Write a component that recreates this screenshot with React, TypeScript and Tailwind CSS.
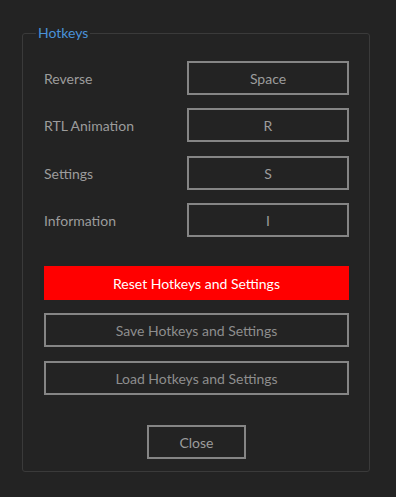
import React from 'react';

const hotkeys = [
  { label: 'Reverse', key: 'Space' },
  { label: 'RTL Animation', key: 'R' },
  { label: 'Settings', key: 'S' },
  { label: 'Information', key: 'I' },
];

const App: React.FC = () => {
  return (
    <div
      className="min-h-[497px] w-[396px] bg-[#232323] pt-[23px] pl-[22px]"
      style={{ fontFamily: 'Lato, "Open Sans", sans-serif' }}
    >
      <fieldset className="w-[348px] rounded-[3px] border border-[#3a3a3a] pt-[18px] pr-[20px] pb-[12px] pl-[21px]">
        <legend className="-ml-[8px] px-[2px] text-[14px] leading-[20px] text-[#4a92d8]">Hotkeys</legend>

        {/* Hotkey rows */}
        <div className="flex flex-col gap-[13px]">
          {hotkeys.map((h, i) => (
            <div key={h.label} className={`flex h-[34px] items-center justify-between ${i === 2 ? 'mt-[1px]' : ''}`}>
              <span className="text-[14px] text-[#9c9c9c]">{h.label}</span>
              <div className="flex h-[34px] w-[162px] items-center justify-center border-2 border-[#858585] text-[14px] text-[#9c9c9c]">
                {h.key}
              </div>
            </div>
          ))}
        </div>

        {/* Actions */}
        <div className="mt-[29px] flex flex-col">
          <button className="flex h-[34px] w-full items-center justify-center bg-[#ff0000] text-[14px] text-white">
            Reset Hotkeys and Settings
          </button>
          <button className="mt-[13px] flex h-[34px] w-full items-center justify-center border-2 border-[#858585] text-[14px] text-[#8e8e8e]">
            Save Hotkeys and Settings
          </button>
          <button className="mt-[14px] flex h-[34px] w-full items-center justify-center border-2 border-[#858585] text-[14px] text-[#8e8e8e]">
            Load Hotkeys and Settings
          </button>
        </div>

        <div className="mt-[30px] flex justify-center">
          <button className="h-[34px] w-[99px] border-2 border-[#858585] text-[14px] text-[#9c9c9c]">Close</button>
        </div>
      </fieldset>
    </div>
  );
};

export default App;
